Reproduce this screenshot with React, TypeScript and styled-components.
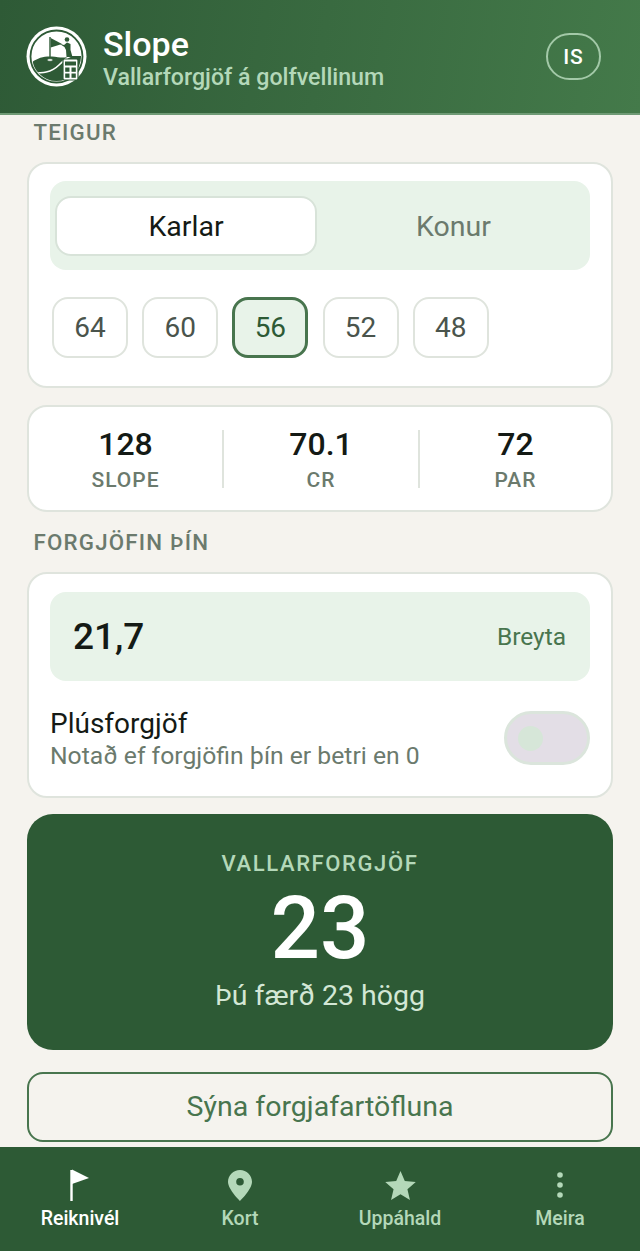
import styled, { createGlobalStyle } from 'styled-components';

const GlobalStyle = createGlobalStyle`
  html, body {
    margin: 0;
    padding: 0;
    background: #f5f3ee;
    font-family: Roboto, "Noto Sans", sans-serif;
  }
  * {
    box-sizing: border-box;
  }
`;

const Screen = styled.div`
  width: 640px;
  height: 1251px;
  display: flex;
  flex-direction: column;
  overflow: hidden;
  background: #f5f3ee;
`;

const Header = styled.header`
  height: 115px;
  flex: none;
  display: flex;
  align-items: center;
  padding: 0 39px 0 26px;
  background: linear-gradient(100deg, #2e5a36 0%, #447a4a 100%);
  border-bottom: 2px solid #6f9a75;
`;

const Logo = styled.svg`
  width: 61px;
  height: 61px;
  flex: none;
`;

const Titles = styled.div`
  margin: 7px 0 0 16px;
  flex: 1;
`;

const Title = styled.div`
  color: #fff;
  font-size: 34px;
  font-weight: 500;
  line-height: 34px;
`;

const Subtitle = styled.div`
  color: #b4d8b9;
  font-size: 23.2px;
  font-weight: 500;
  line-height: 32px;
`;

const LangButton = styled.div`
  width: 55px;
  height: 47px;
  display: flex;
  align-items: center;
  justify-content: center;
  border: 2px solid #a3c9a8;
  border-radius: 24px;
  color: #fff;
  font-size: 21px;
  font-weight: 500;
  letter-spacing: 1px;
`;

const Main = styled.main`
  flex: 1;
  min-height: 0;
  display: flex;
  flex-direction: column;
  padding: 4px 27px 0;
`;

const SectionLabel = styled.div`
  height: 26px;
  margin: 0 0 17px 6.500px;
  color: #6b7a6d;
  font-size: 22.3px;
  font-weight: 500;
  line-height: 26px;
  letter-spacing: 1.2px;
`;

const Card = styled.section`
  background: #fff;
  border: 2px solid #dfe4dd;
  border-radius: 20px;
`;

const TeeCard = styled(Card)`
  height: 226px;
  padding: 17px 21px 0;
`;

const Segmented = styled.div`
  height: 89px;
  display: flex;
  padding: 15px 0 14px 5px;
  background: #e8f3e9;
  border-radius: 16px;
`;

const Segment = styled.div<{ $active?: boolean }>`
  flex: ${({ $active }) => ($active ? '0 0 262px' : '1')};
  display: flex;
  align-items: center;
  justify-content: center;
  border-radius: 16px;
  font-size: 28.500px;
  background: ${({ $active }) => ($active ? '#fff' : 'transparent')};
  border: 2px solid ${({ $active }) => ($active ? '#d8e3d9' : 'transparent')};
  color: ${({ $active }) => ($active ? '#141a15' : '#6b7a6d')};
`;

const Chips = styled.div`
  display: flex;
  gap: 14.200px;
  margin: 27px 0 0 2px;
`;

const Chip = styled.div<{ $active?: boolean }>`
  width: 76px;
  height: 61px;
  display: flex;
  align-items: center;
  justify-content: center;
  border-radius: 16px;
  font-size: 28px;
  color: ${({ $active }) => ($active ? '#2d5a35' : '#4a544c')};
  background: ${({ $active }) => ($active ? '#e8f3e9' : '#fff')};
  border: ${({ $active }) => ($active ? '3px solid #48754e' : '2px solid #dfe4dd')};
`;

const StatsCard = styled(Card)`
  height: 107px;
  margin: 17px 0 17px;
  display: grid;
  grid-template-columns: 193px 196px 193px;
  align-items: center;
`;

const Stat = styled.div`
  height: 58px;
  display: flex;
  flex-direction: column;
  align-items: center;
  justify-content: center;
  & + & {
    border-left: 2px solid #dfe4dd;
  }
`;

const StatValue = styled.div`
  color: #141a15;
  font-size: 32px;
  font-weight: 500;
  line-height: 38px;
`;

const StatLabel = styled.div`
  margin-top: 4px;
  color: #6b7a6d;
  font-size: 21px;
  font-weight: 500;
  line-height: 26px;
  letter-spacing: 1px;
`;

const HandicapCard = styled(Card)`
  height: 226px;
  padding: 18px 21px 0;
`;

const HandicapField = styled.div`
  height: 89px;
  display: flex;
  align-items: center;
  justify-content: space-between;
  padding: 0 24px 0 23px;
  background: #e8f3e9;
  border-radius: 16px;
`;

const HandicapValue = styled.div`
  color: #141a15;
  font-size: 37px;
  font-weight: 500;
`;

const EditLink = styled.div`
  color: #48754e;
  font-size: 24.500px;
`;

const PlusRow = styled.div`
  display: flex;
  align-items: center;
  justify-content: space-between;
  margin-top: 27px;
`;

const PlusTitle = styled.div`
  color: #141a15;
  font-size: 28px;
  line-height: 32px;
`;

const PlusHint = styled.div`
  color: #6b7a6d;
  font-size: 24.700px;
  line-height: 32px;
`;

const ToggleTrack = styled.div`
  width: 86px;
  height: 54px;
  margin-bottom: 4px;
  display: flex;
  align-items: center;
  padding-left: 11px;
  background: #e3dee6;
  border: 3px solid #dbe5dc;
  border-radius: 27px;
`;

const ToggleThumb = styled.div`
  width: 25px;
  height: 25px;
  border-radius: 50%;
  background: #d6e6d8;
`;

const ResultCard = styled.section`
  height: 236px;
  margin-top: 16px;
  flex: none;
  display: flex;
  flex-direction: column;
  align-items: center;
  padding-top: 36px;
  background: #2d5a35;
  border-radius: 26px;
`;

const ResultLabel = styled.div`
  color: #b4d8b9;
  font-size: 22px;
  font-weight: 500;
  line-height: 28px;
  letter-spacing: 1.600px;
`;

const ResultValue = styled.div`
  color: #fff;
  font-size: 87px;
  font-weight: 500;
  line-height: 86px;
  margin-top: 7px;
`;

const ResultHint = styled.div`
  color: #d3e7d5;
  font-size: 28.500px;
  line-height: 34px;
  margin-top: 8px;
`;

const TableButton = styled.div`
  height: 70px;
  margin-top: 22px;
  padding-bottom: 2px;
  flex: none;
  display: flex;
  align-items: center;
  justify-content: center;
  border: 2px solid #48754e;
  border-radius: 16px;
  color: #48754e;
  font-size: 28.500px;
`;

const BottomNav = styled.nav`
  height: 104px;
  flex: none;
  display: grid;
  grid-template-columns: repeat(4, 160px);
  background: #2d5a35;
`;

const NavItem = styled.div<{ $active?: boolean }>`
  display: flex;
  flex-direction: column;
  align-items: center;
  padding-top: 21px;
  color: ${({ $active }) => ($active ? '#fff' : '#b4d8b9')};
`;

const NavIcon = styled.div`
  height: 34px;
  display: flex;
  align-items: center;
  justify-content: center;
`;

const NavLabel = styled.div`
  margin-top: 5px;
  font-size: 19.500px;
  font-weight: 500;
  line-height: 24px;
`;

const DARK = '#2e5a36';

function AppLogo() {
  return (
    <Logo viewBox="0 0 61 61">
      <defs>
        <clipPath id="logo-inner">
          <circle cx="30.500" cy="30.500" r="24.500" />
        </clipPath>
      </defs>
      <circle cx="30.500" cy="30.500" r="30" fill="#fff" />
      <circle cx="30.500" cy="30.500" r="26" fill="#fff" stroke={DARK} strokeWidth="1.800" />
      <g clipPath="url(#logo-inner)">
        <path d="M4 38C10 32 18 30 26 30.500C33 31 38 33 44 30L60 30V60H4z" fill={DARK} />
        <path d="M6 47C16 47 25 47 33 39C37 35 40 32 45 30" fill="none" stroke="#fff" strokeWidth="1.600" />
      </g>
      <path d="M24 11V33" stroke={DARK} strokeWidth="1.400" />
      <path d="M24.700 12L36 18L24.700 21.500z" fill={DARK} />
      <ellipse cx="24" cy="34" rx="3" ry="1.300" fill="#fff" stroke={DARK} strokeWidth="0.700" />
      <circle cx="41" cy="13.500" r="2.300" fill={DARK} />
      <path d="M33 17.500L38 19L41 16.500L44.500 18L44.500 24L46.500 31H40.500L40 24L38.500 21z" fill={DARK} />
      <rect x="37" y="33" width="15" height="21" rx="1.500" fill="#fff" stroke={DARK} strokeWidth="1.200" />
      <rect x="39" y="35.500" width="11" height="4" fill={DARK} />
      <rect x="39.200" y="41.500" width="4.300" height="4.300" fill={DARK} />
      <rect x="45.500" y="41.500" width="4.300" height="4.300" fill={DARK} />
      <rect x="39.200" y="47.500" width="4.300" height="4.300" fill={DARK} />
      <rect x="45.500" y="47.500" width="4.300" height="4.300" fill={DARK} />
    </Logo>
  );
}

function FlagIcon() {
  return (
    <svg width="22" height="32" viewBox="0 0 22 32">
      <path d="M2.500 1V32" stroke="currentColor" strokeWidth="2.400" />
      <path d="M3 0.500L20 9L3 15z" fill="currentColor" />
    </svg>
  );
}

function PinIcon() {
  return (
    <svg width="24" height="31" viewBox="0 0 24 31">
      <path
        fillRule="evenodd"
        d="M12 0C5.400 0 0 5.300 0 11.800C0 19.500 12 31 12 31S24 19.500 24 11.800C24 5.300 18.600 0 12 0zM12 15.500A3.800 3.800 0 1 1 12 7.900A3.800 3.800 0 0 1 12 15.500z"
        fill="currentColor"
      />
    </svg>
  );
}

function StarIcon() {
  return (
    <svg width="31" height="29" viewBox="2 2 20 19">
      <path
        d="M12 17.270L18.180 21L16.540 13.970L22 9.240L14.810 8.630L12 2L9.190 8.630L2 9.240L7.460 13.970L5.820 21z"
        fill="currentColor"
      />
    </svg>
  );
}

function DotsIcon() {
  return (
    <svg width="10" height="28" viewBox="0 0 10 28">
      <circle cx="5" cy="4" r="2.800" fill="currentColor" />
      <circle cx="5" cy="14" r="2.800" fill="currentColor" />
      <circle cx="5" cy="24" r="2.800" fill="currentColor" />
    </svg>
  );
}

const tees = [64, 60, 56, 52, 48];
const stats = [
  { value: '128', label: 'SLOPE' },
  { value: '70.1', label: 'CR' },
  { value: '72', label: 'PAR' },
];

export default function App() {
  return (
    <>
      <GlobalStyle />
      <Screen>
        <Header>
          <AppLogo />
          <Titles>
            <Title>Slope</Title>
            <Subtitle>Vallarforgjöf á golfvellinum</Subtitle>
          </Titles>
          <LangButton>IS</LangButton>
        </Header>
        <Main>
          <SectionLabel>TEIGUR</SectionLabel>
          <TeeCard>
            <Segmented>
              <Segment $active>Karlar</Segment>
              <Segment>Konur</Segment>
            </Segmented>
            <Chips>
              {tees.map((tee) => (
                <Chip key={tee} $active={tee === 56}>
                  {tee}
                </Chip>
              ))}
            </Chips>
          </TeeCard>
          <StatsCard>
            {stats.map((stat) => (
              <Stat key={stat.label}>
                <StatValue>{stat.value}</StatValue>
                <StatLabel>{stat.label}</StatLabel>
              </Stat>
            ))}
          </StatsCard>
          <SectionLabel>FORGJÖFIN ÞÍN</SectionLabel>
          <HandicapCard>
            <HandicapField>
              <HandicapValue>21,7</HandicapValue>
              <EditLink>Breyta</EditLink>
            </HandicapField>
            <PlusRow>
              <div>
                <PlusTitle>Plúsforgjöf</PlusTitle>
                <PlusHint>Notað ef forgjöfin þín er betri en 0</PlusHint>
              </div>
              <ToggleTrack>
                <ToggleThumb />
              </ToggleTrack>
            </PlusRow>
          </HandicapCard>
          <ResultCard>
            <ResultLabel>VALLARFORGJÖF</ResultLabel>
            <ResultValue>23</ResultValue>
            <ResultHint>Þú færð 23 högg</ResultHint>
          </ResultCard>
          <TableButton>Sýna forgjafartöfluna</TableButton>
        </Main>
        <BottomNav>
          <NavItem $active>
            <NavIcon>
              <FlagIcon />
            </NavIcon>
            <NavLabel>Reiknivél</NavLabel>
          </NavItem>
          <NavItem>
            <NavIcon>
              <PinIcon />
            </NavIcon>
            <NavLabel>Kort</NavLabel>
          </NavItem>
          <NavItem>
            <NavIcon>
              <StarIcon />
            </NavIcon>
            <NavLabel>Uppáhald</NavLabel>
          </NavItem>
          <NavItem>
            <NavIcon>
              <DotsIcon />
            </NavIcon>
            <NavLabel>Meira</NavLabel>
          </NavItem>
        </BottomNav>
      </Screen>
    </>
  );
}
